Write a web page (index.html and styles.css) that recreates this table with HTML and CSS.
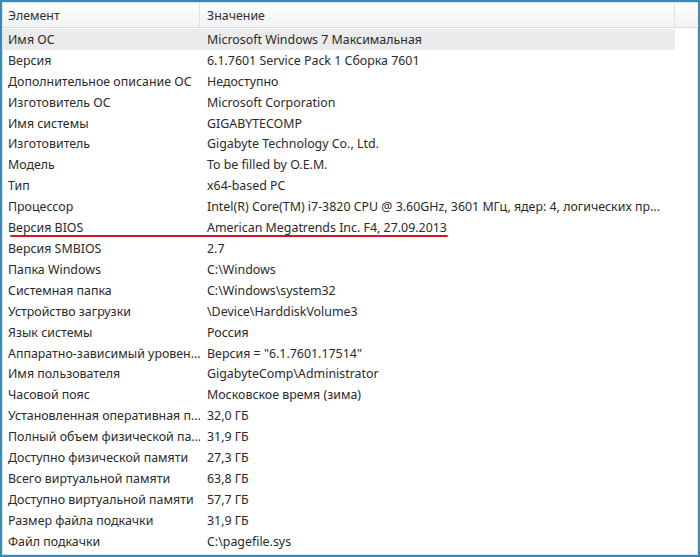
FILE: index.html
```html
<!DOCTYPE html>
<html lang="ru">
<head>
<meta charset="utf-8">
<link rel="stylesheet" href="styles.css">
</head>
<body>
<div class="frame">
  <div class="header">
    <div class="hcell c1">Элемент</div>
    <div class="hcell c2">Значение</div>
    <div class="hcell c3"></div>
  </div>
  <div class="rows">
    <div class="row sel"><span class="k">Имя ОС</span><span class="v">Microsoft Windows 7 Максимальная</span></div>
    <div class="row"><span class="k">Версия</span><span class="v">6.1.7601 Service Pack 1 Сборка 7601</span></div>
    <div class="row"><span class="k">Дополнительное описание ОС</span><span class="v">Недоступно</span></div>
    <div class="row"><span class="k">Изготовитель ОС</span><span class="v">Microsoft Corporation</span></div>
    <div class="row"><span class="k">Имя системы</span><span class="v">GIGABYTECOMP</span></div>
    <div class="row"><span class="k">Изготовитель</span><span class="v">Gigabyte Technology Co., Ltd.</span></div>
    <div class="row"><span class="k">Модель</span><span class="v">To be filled by O.E.M.</span></div>
    <div class="row"><span class="k">Тип</span><span class="v">x64-based PC</span></div>
    <div class="row"><span class="k">Процессор</span><span class="v">Intel(R) Core(TM) i7-3820 CPU @ 3.60GHz, 3601 МГц, ядер: 4, логических пр...</span></div>
    <div class="row bios"><span class="k">Версия BIOS</span><span class="v">American Megatrends Inc. F4, 27.09.2013</span><span class="mark"></span></div>
    <div class="row"><span class="k">Версия SMBIOS</span><span class="v">2.7</span></div>
    <div class="row"><span class="k">Папка Windows</span><span class="v">C:\Windows</span></div>
    <div class="row"><span class="k">Системная папка</span><span class="v">C:\Windows\system32</span></div>
    <div class="row"><span class="k">Устройство загрузки</span><span class="v">\Device\HarddiskVolume3</span></div>
    <div class="row"><span class="k">Язык системы</span><span class="v">Россия</span></div>
    <div class="row"><span class="k">Аппаратно-зависимый уровен...</span><span class="v">Версия = "6.1.7601.17514"</span></div>
    <div class="row"><span class="k">Имя пользователя</span><span class="v">GigabyteComp\Administrator</span></div>
    <div class="row"><span class="k">Часовой пояс</span><span class="v">Московское время (зима)</span></div>
    <div class="row"><span class="k">Установленная оперативная п...</span><span class="v">32,0 ГБ</span></div>
    <div class="row"><span class="k">Полный объем физической па...</span><span class="v">31,9 ГБ</span></div>
    <div class="row"><span class="k">Доступно физической памяти</span><span class="v">27,3 ГБ</span></div>
    <div class="row"><span class="k">Всего виртуальной памяти</span><span class="v">63,8 ГБ</span></div>
    <div class="row"><span class="k">Доступно виртуальной памяти</span><span class="v">57,7 ГБ</span></div>
    <div class="row"><span class="k">Размер файла подкачки</span><span class="v">31,9 ГБ</span></div>
    <div class="row"><span class="k">Файл подкачки</span><span class="v">C:\pagefile.sys</span></div>
  </div>
</div>
</body>
</html>
```
FILE: styles.css
```css
* { box-sizing: border-box; }
html, body { margin: 0; padding: 0; background: #fff; }
body {
  width: 700px;
  height: 557px;
  font-family: "Noto Sans", "Open Sans", sans-serif;
  font-size: 12.4px;
  color: #2a2a2a;
}
.frame {
  width: 700px;
  height: 557px;
  border: 2px solid #3f89b0;
  box-shadow: inset 0 0 0 1px #d6e8f1;
  background: #fff;
  overflow: hidden;
  padding-top: 1px;
  padding-left: 1px;
}
.header {
  display: flex;
  height: 25px;
  background: linear-gradient(#ffffff, #f1f2f4);
  border-bottom: 1px solid #d9dbde;
}
.hcell {
  display: flex;
  align-items: center;
  padding-left: 5px;
  border-right: 1px solid #e1e3e6;
  color: #2f2f2f;
}
.c1 { width: 197px; }
.c2 { width: 475px; padding-left: 7px; }
.c3 { flex: 1; border-right: none; }
.rows { display: flex; flex-direction: column; padding-top: 1px; }
.row {
  position: relative;
  display: flex;
  align-items: center;
  height: 20.92px;
  width: 672px;
  white-space: nowrap;
}
.row.sel { background: #ebebeb; }
.k { width: 197px; padding-left: 5px; overflow: hidden; }
.v { padding-left: 7px; }
.mark {
  position: absolute;
  left: 7px;
  top: 18px;
  width: 438px;
  height: 2px;
  background: #d3172a;
  border-radius: 1px;
}
```
